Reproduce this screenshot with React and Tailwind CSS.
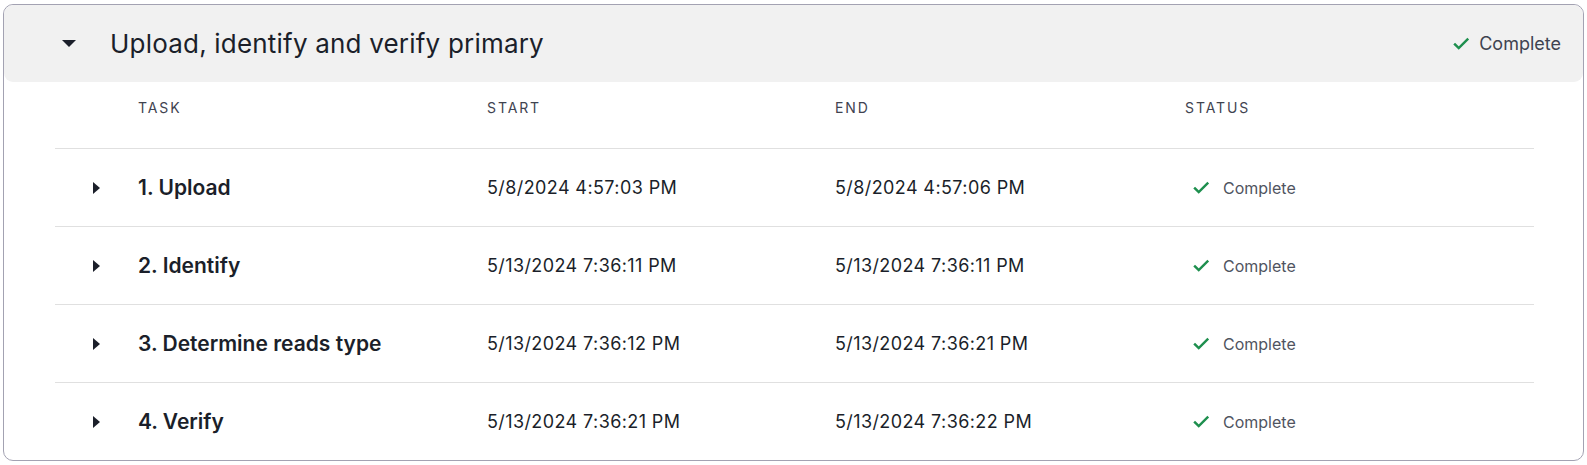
import React from "react";

const rows = [
  { name: "1. Upload", start: "5/8/2024 4:57:03 PM", end: "5/8/2024 4:57:06 PM" },
  { name: "2. Identify", start: "5/13/2024 7:36:11 PM", end: "5/13/2024 7:36:11 PM" },
  { name: "3. Determine reads type", start: "5/13/2024 7:36:12 PM", end: "5/13/2024 7:36:21 PM" },
  { name: "4. Verify", start: "5/13/2024 7:36:21 PM", end: "5/13/2024 7:36:22 PM" },
];

function Check({ className }) {
  return (
    <svg viewBox="0 0 24 24" className={className} fill="none" stroke="#1e8f4e" strokeWidth="3.2" strokeLinecap="square">
      <path d="M4 12.5l5 5L20.5 6" />
    </svg>
  );
}

export default function App() {
  return (
    <div className="pt-[4px] pl-[3px] pr-[3px] bg-white" style={{ fontFamily: "Inter, 'Noto Sans', sans-serif" }}>
      <div className="h-[457px] border border-[#a3a2b2] rounded-[10px] overflow-hidden">
        <div className="h-[77px] bg-[#f1f1f1] rounded-[9px] flex items-center pl-[58px] pr-[22px]">
          <svg width="14" height="7" viewBox="0 0 14 7" className="mr-[34px]">
            <path d="M0 0h14L7 7z" fill="#1b1f2a" />
          </svg>
          <div className="text-[26px] tracking-[0.2px] text-[#1b1f2a]">Upload, identify and verify primary</div>
          <div className="ml-auto flex items-center gap-[9px] text-[18px] text-[#3f4350]">
            <Check className="w-[18px] h-[18px]" />
            <span>Complete</span>
          </div>
        </div>
        <div className="ml-[51px] mr-[49px]">
          <div className="grid grid-cols-[432px_348px_350px_1fr] h-[66px] items-start pt-[15px] text-[14px] tracking-[1.9px] text-[#3f4350]">
            <div className="pl-[83px]">TASK</div>
            <div>START</div>
            <div>END</div>
            <div>STATUS</div>
          </div>
          {rows.map((r) => (
            <div key={r.name} className="grid grid-cols-[432px_348px_350px_1fr] h-[78px] items-center border-t border-[#e0e0e0]">
              <div className="flex items-center">
                <svg width="7" height="12" viewBox="0 0 7 12" className="ml-[38px] mr-[38px]">
                  <path d="M0 0v12l7-6z" fill="#1b1f2a" />
                </svg>
                <span className="text-[21px] font-semibold text-[#1b1f2a]">{r.name}</span>
              </div>
              <div className="text-[18px] tracking-[0.4px] text-[#1b1f2a]">{r.start}</div>
              <div className="text-[18px] tracking-[0.4px] text-[#1b1f2a]">{r.end}</div>
              <div className="flex items-center pl-[7px] gap-[13px]">
                <Check className="w-[18px] h-[18px]" />
                <span className="text-[16px] text-[#50545f]">Complete</span>
              </div>
            </div>
          ))}
        </div>
      </div>
    </div>
  );
}
